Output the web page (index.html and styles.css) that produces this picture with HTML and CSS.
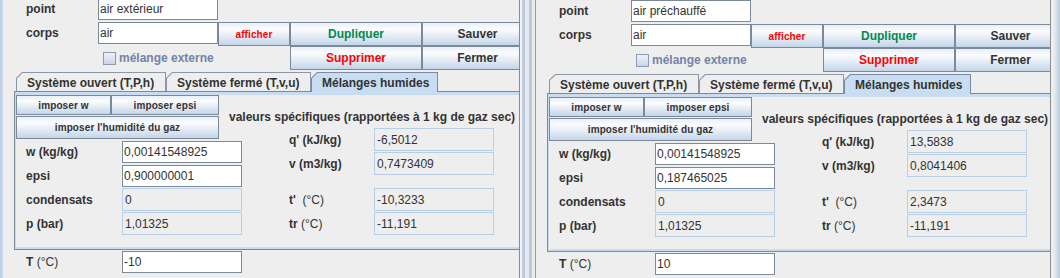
FILE: index.html
```html
<!DOCTYPE html>
<html lang="fr">
<head>
<meta charset="utf-8">
<title>Mélanges humides</title>
<link rel="stylesheet" href="styles.css">
</head>
<body>
<div class="screen">
  <div class="edge edge-l"></div>

  <section class="win win-a">
    <div class="inner">
      <div class="head">
        <span class="hlbl">point</span>
        <div class="field">air extérieur</div>
        <span class="hspace"></span>
        <span class="hlbl">corps</span>
        <div class="field">air</div>
        <div class="btn btn-small red">afficher</div>
        <div class="btn green">Dupliquer</div>
        <div class="btn">Sauver</div>
        <div class="check-cell"><span class="cb"></span><span class="cb-lbl">mélange externe</span></div>
        <div class="btn red">Supprimer</div>
        <div class="btn">Fermer</div>
      </div>

      <div class="tabs">
        <div class="tab tab-open"><div class="tab-face">Système ouvert (T,P,h)</div></div>
        <div class="tab tab-closed"><div class="tab-face">Système fermé (T,v,u)</div></div>
        <div class="tab tab-humid tab-on"><div class="tab-face">Mélanges humides</div></div>
      </div>

      <div class="panel">
        <div class="col-l">
          <div class="btns">
            <div class="btn btn-small">imposer w</div>
            <div class="btn btn-small">imposer epsi</div>
            <div class="btn btn-small btn-wide">imposer l'humidité du gaz</div>
          </div>
          <div class="frow gap2"><span class="lbl">w (kg/kg)</span><div class="field">0,00141548925</div></div>
          <div class="frow gap2"><span class="lbl">epsi</span><div class="field">0,900000001</div></div>
          <div class="frow gap1"><span class="lbl">condensats</span><div class="field ro">0</div></div>
          <div class="frow gap1"><span class="lbl">p (bar)</span><div class="field ro">1,01325</div></div>
        </div>
        <div class="col-r">
          <div class="title">valeurs spécifiques (rapportées à 1 kg de gaz sec)</div>
          <div class="rrow gap3"><span class="lbl">q' (kJ/kg)</span><div class="field ro">-6,5012</div></div>
          <div class="rrow gap1"><span class="lbl">v (m3/kg)</span><div class="field ro">0,7473409</div></div>
          <div class="rrow gap13"><span class="lbl">t'&nbsp; <span class="thin">(°C)</span></span><div class="field ro">-10,3233</div></div>
          <div class="rrow gap1"><span class="lbl">tr <span class="thin">(°C)</span></span><div class="field ro">-11,191</div></div>
        </div>
      </div>

      <div class="trow"><span class="lbl">T <span class="thin">(°C)</span></span><div class="field">-10</div></div>
    </div>
  </section>

  <div class="edge edge-m"></div>

  <section class="win win-b">
    <div class="inner">
      <div class="head">
        <span class="hlbl">point</span>
        <div class="field">air préchauffé</div>
        <span class="hspace"></span>
        <span class="hlbl">corps</span>
        <div class="field">air</div>
        <div class="btn btn-small red">afficher</div>
        <div class="btn green">Dupliquer</div>
        <div class="btn">Sauver</div>
        <div class="check-cell"><span class="cb"></span><span class="cb-lbl">mélange externe</span></div>
        <div class="btn red">Supprimer</div>
        <div class="btn">Fermer</div>
      </div>

      <div class="tabs">
        <div class="tab tab-open"><div class="tab-face">Système ouvert (T,P,h)</div></div>
        <div class="tab tab-closed"><div class="tab-face">Système fermé (T,v,u)</div></div>
        <div class="tab tab-humid tab-on"><div class="tab-face">Mélanges humides</div></div>
      </div>

      <div class="panel">
        <div class="col-l">
          <div class="btns">
            <div class="btn btn-small">imposer w</div>
            <div class="btn btn-small">imposer epsi</div>
            <div class="btn btn-small btn-wide">imposer l'humidité du gaz</div>
          </div>
          <div class="frow gap2"><span class="lbl">w (kg/kg)</span><div class="field">0,00141548925</div></div>
          <div class="frow gap2"><span class="lbl">epsi</span><div class="field">0,187465025</div></div>
          <div class="frow gap1"><span class="lbl">condensats</span><div class="field ro">0</div></div>
          <div class="frow gap1"><span class="lbl">p (bar)</span><div class="field ro">1,01325</div></div>
        </div>
        <div class="col-r">
          <div class="title">valeurs spécifiques (rapportées à 1 kg de gaz sec)</div>
          <div class="rrow gap3"><span class="lbl">q' (kJ/kg)</span><div class="field ro">13,5838</div></div>
          <div class="rrow gap1"><span class="lbl">v (m3/kg)</span><div class="field ro">0,8041406</div></div>
          <div class="rrow gap13"><span class="lbl">t'&nbsp; <span class="thin">(°C)</span></span><div class="field ro">2,3473</div></div>
          <div class="rrow gap1"><span class="lbl">tr <span class="thin">(°C)</span></span><div class="field ro">-11,191</div></div>
        </div>
      </div>

      <div class="trow"><span class="lbl">T <span class="thin">(°C)</span></span><div class="field">10</div></div>
    </div>
  </section>

  <div class="edge edge-r"></div>
</div>
</body>
</html>
```

FILE: styles.css
```css
* { box-sizing: border-box; }

html, body {
  margin: 0;
  padding: 0;
}

body {
  width: 1060px;
  height: 278px;
  overflow: hidden;
  background: #eeeeee;
  font-family: "Liberation Sans", Arial, sans-serif;
  font-size: 12px;
  color: #333333;
}

.screen {
  display: flex;
  width: 1060px;
  height: 278px;
}

.edge { flex: none; height: 100%; }

.edge-l {
  width: 3px;
  background: linear-gradient(to right, #b7c7e4, #d3ddef);
}

.edge-m {
  width: 16px;
  background: linear-gradient(to right,
    #f2f2f2 0, #f2f2f2 2px,
    #c6d1e3 2px, #b9c7dd 5px,
    #e7eaef 5px, #e7eaef 9px,
    #b6c4db 9px, #c3cfe2 12px,
    #ececec 12px, #ececec 15px,
    #9c9c9c 15px, #9c9c9c 16px);
}

.edge-r {
  width: 9px;
  background: linear-gradient(to right, #f3f3f3 0, #e3e7ee 4px, #bccadf 9px);
}

.win {
  flex: none;
  height: 100%;
  overflow: hidden;
  background: #eeeeee;
  border-right: 1px solid #8c8c8c;
}

.win-a { width: 517px; }
.win-b { width: 515px; }

.inner { width: 545px; }
.win-a .inner { margin-top: -2px; }

/* ---------- header ---------- */
.head {
  display: grid;
  grid-template-columns: 95px 120px 72px 132px 111px;
  grid-template-rows: 24px 24px 24px;
}

.hlbl {
  height: 22px;
  padding-left: 23px;
  font-weight: bold;
  display: flex;
  align-items: center;
}

.hspace { grid-column: 3 / 6; }

.field {
  height: 22px;
  border: 1px solid #7a8a99;
  background: #ffffff;
  padding-left: 1px;
  display: flex;
  align-items: center;
  white-space: nowrap;
  overflow: hidden;
  color: #333333;
}

.field.ro {
  height: 23px;
  border-color: #b8cfe5;
  background: #eeeeee;
  padding-left: 2px;
}

.btn {
  border: 1px solid #7a8a99;
  background: linear-gradient(to bottom, #e9f0f8 0%, #fbfcfe 28%, #e8eef6 55%, #c3d5e9 100%);
  font-weight: bold;
  font-size: 12px;
  color: #333333;
  display: flex;
  align-items: center;
  justify-content: center;
  white-space: nowrap;
}

.btn-small {
  font-size: 10px;
  letter-spacing: 0.1px;
}

.red { color: #ff0000; }
.green { color: #008a50; }

.check-cell {
  grid-column: 2 / 4;
  display: flex;
  align-items: center;
  padding-left: 5px;
}

.cb {
  width: 13px;
  height: 13px;
  border: 1px solid #8b9bb4;
  background: linear-gradient(to bottom, #eef2f8, #c9d6e7);
  margin-right: 3px;
  flex: none;
}

.cb-lbl {
  font-weight: bold;
  color: #7484a8;
  white-space: nowrap;
}

/* ---------- tabs ---------- */
.tabs {
  display: flex;
  align-items: flex-start;
  height: 19px;
  margin-top: 2px;
  padding-left: 13px;
}

.tab {
  flex: none;
  height: 19px;
  padding: 1px 1px 0 1px;
  background: #8a97a6;
  clip-path: polygon(6px 0, 100% 0, 100% 100%, 0 100%, 0 6px);
  font-weight: bold;
  white-space: nowrap;
}

.tab-face {
  height: 100%;
  background: #eeeeee;
  clip-path: polygon(5.6px 0, 100% 0, 100% 100%, 0 100%, 0 5.6px);
  display: flex;
  align-items: center;
  padding-left: 10px;
  padding-top: 1px;
}

.tab-open { width: 150px; }
.tab-closed { width: 145px; }
.tab-humid { width: 127px; }

.tab-on {
  position: relative;
  z-index: 2;
  height: 20px;
  margin-bottom: -1px;
  background: #7a8aa6;
}

.tab-on .tab-face { background: #c8ddf2; }

/* ---------- tab panel ---------- */
.panel {
  margin-left: 11px;
  border: 1px solid #7a8a99;
  border-right: none;
  box-shadow: inset 1px 0 0 #c8ddf2, inset 0 3px 0 #c8ddf2, inset 0 -2px 0 #c8ddf2;
  padding: 3px 0 14px 1px;
  display: flex;
}

.col-l {
  flex: none;
  width: 213px;
}

.btns {
  display: grid;
  grid-template-columns: 95px 108px;
  grid-template-rows: 20px 23px;
  row-gap: 1px;
}

.btn-wide { grid-column: 1 / 3; }

.frow, .rrow, .trow {
  display: flex;
  align-items: center;
  white-space: nowrap;
}

.lbl {
  flex: none;
  font-weight: bold;
}

.thin { font-weight: normal; }

.frow .lbl { width: 106px; padding-left: 10px; }
.frow .field, .rrow .field, .trow .field { width: 120px; flex: none; }

.gap1 { margin-top: 1px; }
.gap2 { margin-top: 2px; }
.gap3 { margin-top: 3px; }
.gap13 { margin-top: 13px; }

.col-r {
  flex: none;
  width: 300px;
}

.title {
  margin-top: 14px;
  line-height: 16px;
  font-weight: bold;
  white-space: nowrap;
}

.rrow { padding-left: 60px; }
.rrow .lbl { width: 85px; }

.trow { margin-top: 1px; }
.trow .lbl { width: 119px; padding-left: 23px; }
```
